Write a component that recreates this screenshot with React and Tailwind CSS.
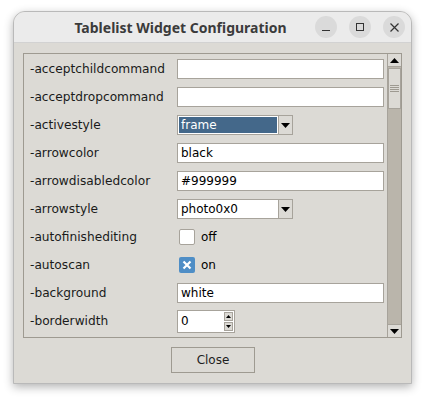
import React from 'react';

const FONT = { fontFamily: '"DejaVu Sans", "Noto Sans", sans-serif' };

const ROWS = [
  { label: '-acceptchildcommand', kind: 'entry', value: '' },
  { label: '-acceptdropcommand', kind: 'entry', value: '' },
  { label: '-activestyle', kind: 'combo', value: 'frame', selected: true },
  { label: '-arrowcolor', kind: 'entry', value: 'black' },
  { label: '-arrowdisabledcolor', kind: 'entry', value: '#999999' },
  { label: '-arrowstyle', kind: 'combo', value: 'photo0x0' },
  { label: '-autofinishediting', kind: 'check', value: 'off' },
  { label: '-autoscan', kind: 'check', value: 'on', checked: true },
  { label: '-background', kind: 'entry', value: 'white' },
  { label: '-borderwidth', kind: 'spin', value: '0' },
];

function Triangle({ down = true, size = 4 }) {
  return (
    <svg width={size * 2 + 1} height={size + 1} viewBox={`0 0 ${size * 2 + 1} ${size + 1}`}>
      <polygon
        points={down ? `0,0 ${size * 2 + 1},0 ${size + 0.5},${size + 1}` : `0,${size + 1} ${size * 2 + 1},${size + 1} ${size + 0.5},0`}
        fill="#000"
      />
    </svg>
  );
}

function Field({ row }) {
  if (row.kind === 'entry') {
    return (
      <div className="flex h-[20px] w-[207px] items-center border border-[#a7a39b] bg-white pl-[3px] text-[12px] text-black">
        {row.value}
      </div>
    );
  }
  if (row.kind === 'combo') {
    return (
      <div className="flex h-[20px] w-[116px] border border-[#a7a39b] bg-white">
        <div className={`flex flex-1 items-center pl-[2px] text-[12px] ${row.selected ? 'm-[1px] bg-[#44688a] text-white' : 'pl-[3px] text-black'}`}>
          {row.value}
        </div>
        <div className="flex w-[14px] items-center justify-center border-l border-[#a7a39b] bg-[#dcdad5]">
          <Triangle />
        </div>
      </div>
    );
  }
  if (row.kind === 'check') {
    return (
      <div className="flex items-center gap-[6px] pl-[2px] text-[12px] text-black">
        {row.checked ? (
          <div className="flex h-[16px] w-[16px] items-center justify-center rounded-[2px] bg-[#4f8ec6]">
            <svg width="10" height="10" viewBox="0 0 10 10">
              <path d="M1.5 1.5 L8.5 8.5 M8.5 1.5 L1.5 8.5" stroke="#fff" strokeWidth="2.2" />
            </svg>
          </div>
        ) : (
          <div className="h-[16px] w-[16px] rounded-[2px] border border-[#a7a39b] bg-white" />
        )}
        <span>{row.value}</span>
      </div>
    );
  }
  return (
    <div className="flex h-[23px] w-[58px] items-center border border-[#a7a39b] bg-white pl-[3px] pr-[1px] text-[12px] text-black">
      <span className="flex-1">{row.value}</span>
      <div className="flex flex-col gap-[1px]">
        <div className="flex h-[9px] w-[9px] items-center justify-center border border-[#a7a39b] bg-[#dcdad5]">
          <Triangle down={false} size={2} />
        </div>
        <div className="flex h-[9px] w-[9px] items-center justify-center border border-[#a7a39b] bg-[#dcdad5]">
          <Triangle size={2} />
        </div>
      </div>
    </div>
  );
}

function Scrollbar() {
  return (
    <div className="flex w-[14px] flex-col border-l border-[#a7a39b] bg-[#bab5ab]">
      <div className="flex h-[13px] items-center justify-center border-b border-[#a7a39b] bg-[#dcdad5]">
        <Triangle down={false} />
      </div>
      <div className="mt-[1px] flex h-[41px] flex-col items-center justify-center gap-[1px] border border-[#a7a39b] bg-[#dcdad5]">
        <div className="h-px w-[9px] bg-[#9e9a91]" />
        <div className="h-px w-[9px] bg-[#9e9a91]" />
        <div className="h-px w-[9px] bg-[#9e9a91]" />
        <div className="h-px w-[9px] bg-[#9e9a91]" />
      </div>
      <div className="flex-1" />
      <div className="flex h-[13px] items-center justify-center border-t border-[#a7a39b] bg-[#dcdad5]">
        <Triangle />
      </div>
    </div>
  );
}

export default function App() {
  return (
    <div className="h-[400px] w-[425px] bg-white pl-[13px] pt-[11px]" style={FONT}>
      <div className="flex h-[373px] w-[399px] flex-col overflow-hidden rounded-t-[12px] border border-[#b9b9b9] bg-[#dcdad5] shadow-[0_3px_10px_rgba(0,0,0,0.3)]">
        <div className="relative flex h-[31px] items-center justify-center border-b border-[#d2d2d2] bg-[#ebebeb]">
          <span
            className="pr-[64px] text-[14px] font-bold text-[#3b3b3b]"
            style={{ fontFamily: '"Noto Sans", "Open Sans", sans-serif' }}
          >
            Tablelist Widget Configuration
          </span>
          <div className="absolute right-[6px] top-[4px] flex gap-[12px]">
            <div className="flex h-[22px] w-[22px] items-center justify-center rounded-full bg-[#dadada]">
              <div className="mt-[6px] h-px w-[8px] bg-[#333]" />
            </div>
            <div className="flex h-[22px] w-[22px] items-center justify-center rounded-full bg-[#dadada]">
              <div className="h-[8px] w-[8px] border border-[#333]" />
            </div>
            <div className="flex h-[22px] w-[22px] items-center justify-center rounded-full bg-[#dadada]">
              <svg width="9" height="9" viewBox="0 0 9 9">
                <path d="M0.5 0.5 L8.5 8.5 M8.5 0.5 L0.5 8.5" stroke="#333" strokeWidth="1.2" />
              </svg>
            </div>
          </div>
        </div>

        <div className="flex flex-1 flex-col px-[9px] pt-[10px]">
          <div className="flex h-[285px] border border-[#9e9a91]">
            <div className="flex flex-1 flex-col pt-[1px]">
              {ROWS.map((row) => (
                <div key={row.label} className="flex h-[28px] items-center">
                  <span className="w-[153px] pl-[6px] text-[12.2px] text-[#1a1a1a]">{row.label}</span>
                  <Field row={row} />
                </div>
              ))}
            </div>
            <Scrollbar />
          </div>
          <div className="flex justify-center pt-[9px]">
            <button
              type="button"
              className="ml-[1px] h-[26px] w-[84px] border border-[#9e9a91] bg-[#dcdad5] text-[12px] text-[#1e1e1e]"
            >
              Close
            </button>
          </div>
        </div>
      </div>
    </div>
  );
}
